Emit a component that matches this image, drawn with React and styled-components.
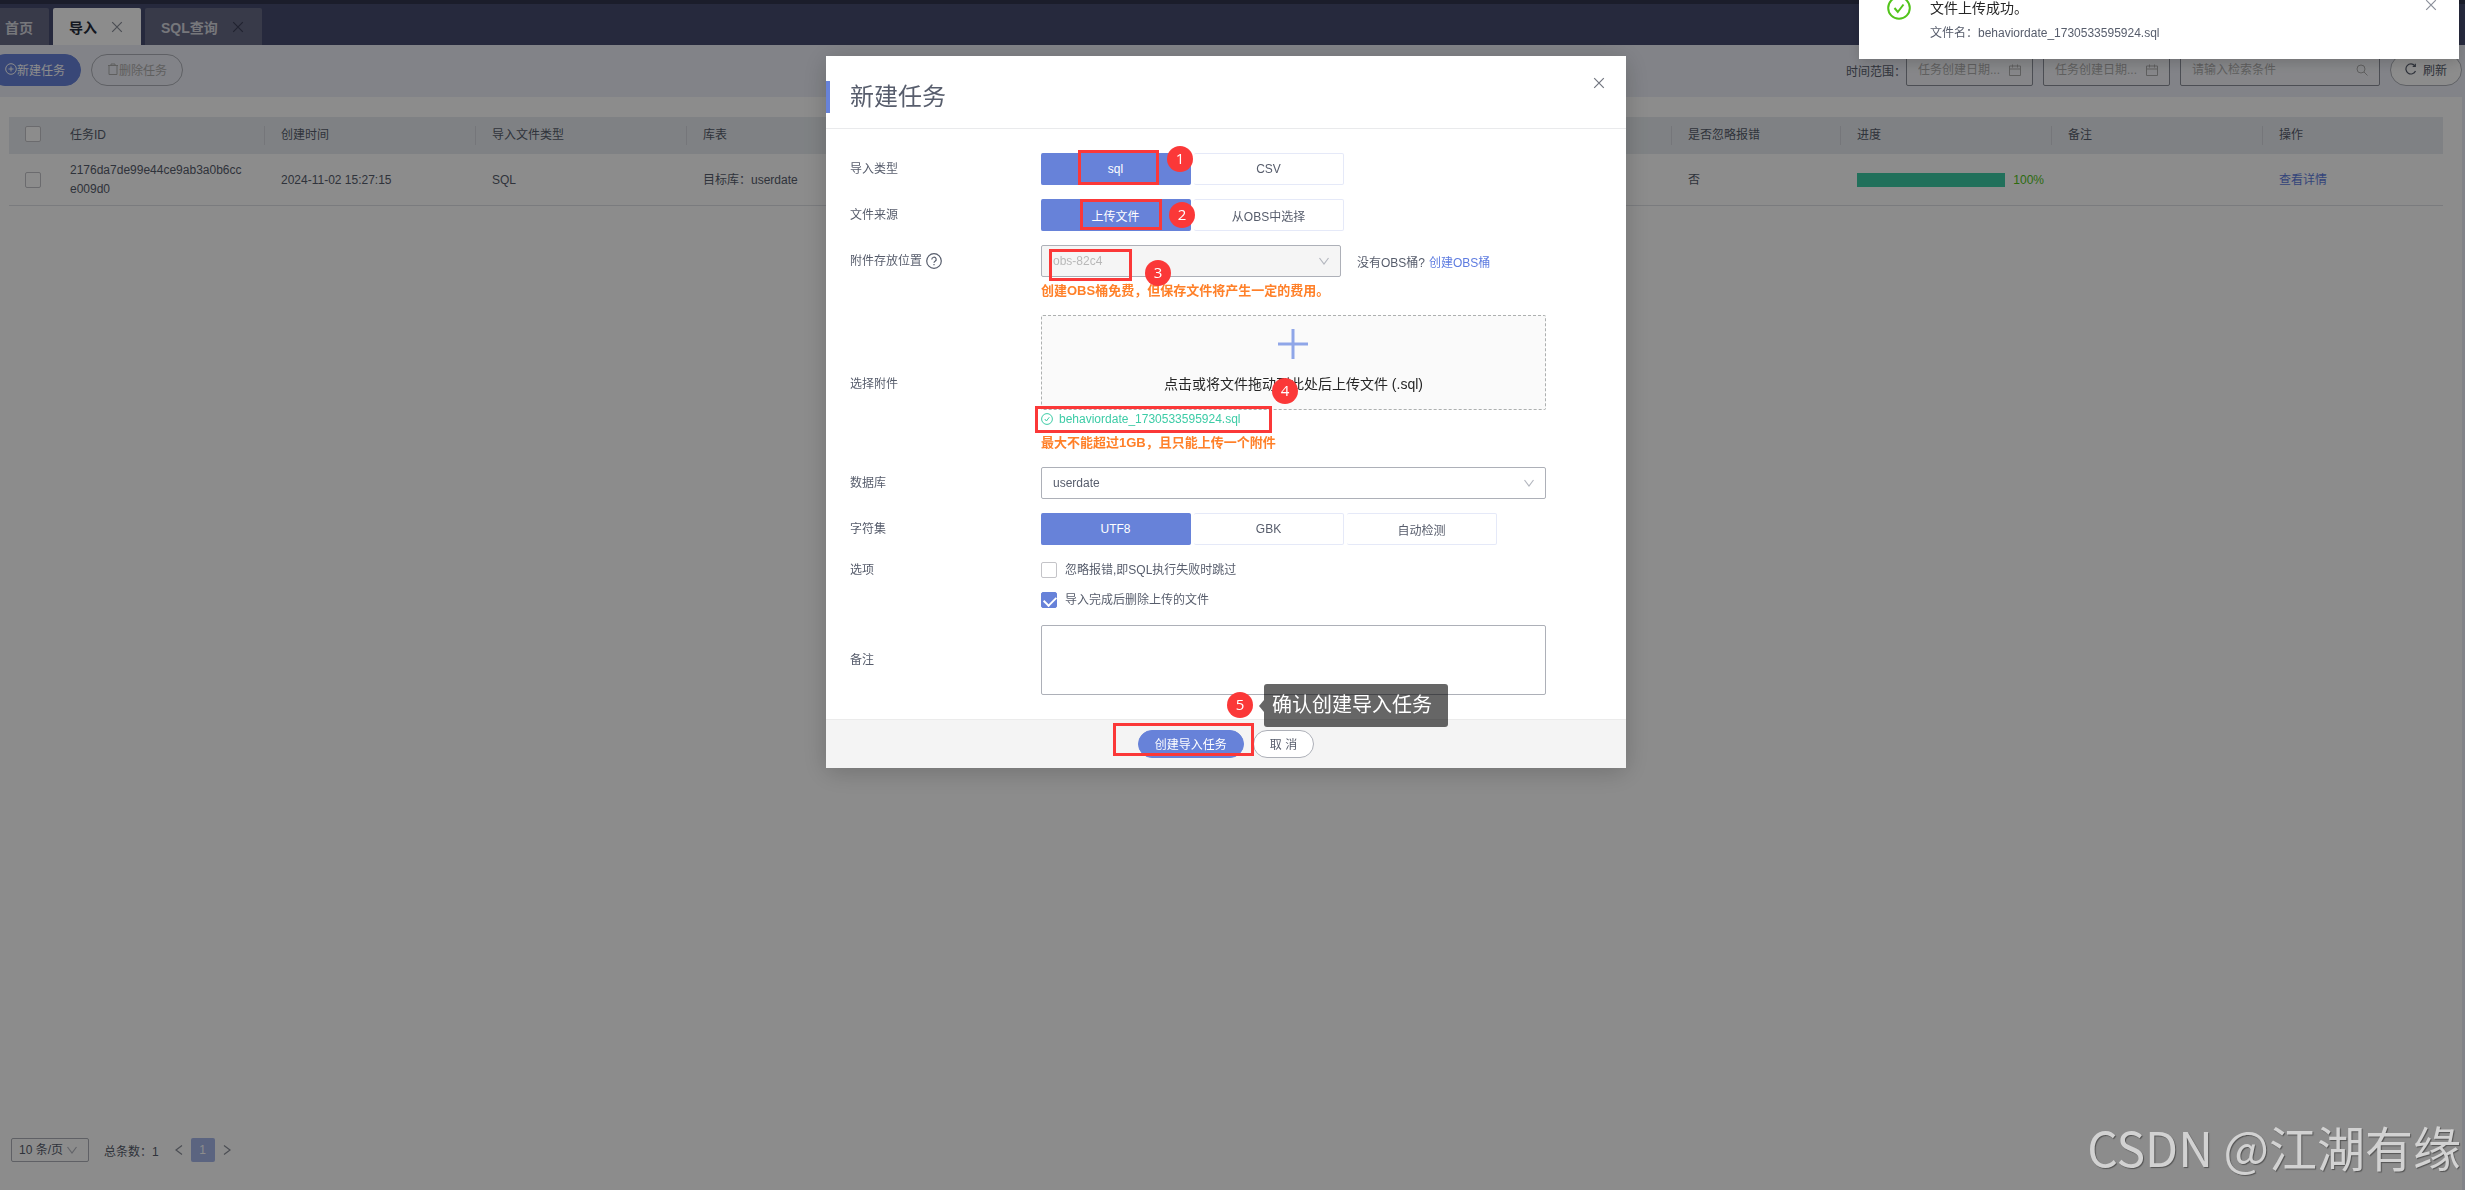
import React, { useState } from "react";
import styled, { createGlobalStyle } from "styled-components";

const GlobalStyle = createGlobalStyle`
  * {
    box-sizing: border-box;
  }
  body {
    margin: 0;
    background: #edeff7;
    overflow: hidden;
  }
  body, button, input, select, textarea {
    font-family: "Liberation Sans", "Noto Sans CJK SC", sans-serif;
    font-size: 12px;
    color: #575d6c;
  }
  a {
    color: #5e7ce0;
    text-decoration: none;
  }
`;

/* ---------- icons ---------- */

const Svg = styled.svg`
  display: block;
  flex: none;
  fill: none;
  stroke: currentColor;
`;

const CloseIcon = () => (
  <Svg width="12" height="12" viewBox="0 0 12 12" strokeWidth="1.2">
    <path d="M1.200 1.200l9.600 9.600M10.800 1.200l-9.600 9.600" />
  </Svg>
);

const DownIcon = () => (
  <Svg width="12" height="12" viewBox="0 0 12 12" strokeWidth="1.2">
    <path d="M1.500 3L6 9l4.500-6" />
  </Svg>
);

const ArrowIcon = ({ next }) => (
  <Svg width="10" height="12" viewBox="0 0 10 12" strokeWidth="1.2">
    <path d={next ? "M2 1.500L8 6l-6 4.500" : "M8 1.500L2 6l6 4.500"} />
  </Svg>
);

const PlusCircleIcon = () => (
  <Svg width="12" height="12" viewBox="0 0 12 12" strokeWidth="1">
    <circle cx="6" cy="6" r="5.300" />
    <path d="M6 3.500v5M3.500 6h5" />
  </Svg>
);

const TrashIcon = () => (
  <Svg width="12" height="12" viewBox="0 0 12 12" strokeWidth="1">
    <path d="M1 2.500h10M4 2.500v-1.500h4v1.500M2 2.500v9h8v-9" />
  </Svg>
);

const CalendarIcon = () => (
  <Svg width="12" height="12" viewBox="0 0 12 12" strokeWidth="1">
    <path d="M.5 2h11v9.500H.5zM.5 5h11M3.500.5v3M8.500.5v3" />
  </Svg>
);

const SearchIcon = () => (
  <Svg width="12" height="12" viewBox="0 0 12 12" strokeWidth="1">
    <circle cx="5" cy="5" r="4" />
    <path d="M8 8l3.500 3.500" />
  </Svg>
);

const RefreshIcon = () => (
  <Svg width="12" height="12" viewBox="0 0 12 12" strokeWidth="1.2">
    <path d="M10.500 8A5 5 0 1 1 9.800 2.800" />
    <path d="M10.300.8v2.600H7.700" />
  </Svg>
);

const HelpIcon = () => (
  <Svg width="16" height="16" viewBox="0 0 16 16" strokeWidth="1.2">
    <circle cx="8" cy="8" r="7.300" />
    <path d="M5.800 6.400a2.200 2.200 0 1 1 3.300 1.900c-.8.500-1.100.8-1.100 1.500" />
    <path d="M8 11v1.300" />
  </Svg>
);

const CheckCircleIcon = ({ size }) => (
  <Svg width={size} height={size} viewBox="0 0 24 24" strokeWidth="2">
    <circle cx="12" cy="12" r="10.800" />
    <path d="M7.500 12l3.300 4L16.500 8.500" />
  </Svg>
);

const PlusIcon = () => (
  <Svg width="30" height="30" viewBox="0 0 30 30" strokeWidth="3">
    <path d="M15 0v30M0 15h30" />
  </Svg>
);

/* ---------- page ---------- */

const Page = styled.div`
  display: flex;
  flex-direction: column;
  min-height: 100vh;
  overflow: hidden;
`;

const TabBar = styled.nav`
  display: flex;
  align-items: flex-end;
  gap: 4px;
  height: 45px;
  margin-left: -11px;
  border-top: 4px solid #32364f;
  background: #464c70;
`;

const Tab = styled.div`
  display: flex;
  align-items: center;
  gap: 14px;
  height: 37px;
  padding: 0 ${(p) => (p.$closable ? 18 : 16)}px 0 16px;
  border-radius: 2px 2px 0 0;
  background: ${(p) => (p.$active ? "#fff" : "#676a85")};
  color: ${(p) => (p.$active ? "#252b3a" : "#d8d9e0")};
  font-size: 14px;
  font-weight: 700;
`;

const IconButton = styled.button`
  display: flex;
  align-items: center;
  justify-content: center;
  padding: 0;
  border: 0;
  background: none;
  color: ${(p) => p.$color || "#8a8e99"};
`;

const Toolbar = styled.div`
  display: flex;
  align-items: center;
  justify-content: space-between;
  height: 52px;
  padding: 0 3px 2px 0;
  margin-left: -11px;
  background: #edeff7;
`;

const Group = styled.div`
  display: flex;
  align-items: center;
  gap: 10px;
`;

const PillButton = styled.button`
  display: flex;
  align-items: center;
  justify-content: center;
  gap: ${(p) => p.$gap || 0}px;
  height: ${(p) => p.$height || 32}px;
  padding: 0 ${(p) => p.$pad || 15}px 2px;
  border: 1px solid ${(p) => (p.$primary ? "#6782d9" : "#adb0b8")};
  border-radius: 16px;
  background: ${(p) => (p.$primary ? "#6782d9" : "#fff")};
  color: ${(p) => (p.$primary ? "#fff" : "#575d6c")};
  white-space: pre;

  &:disabled {
    background: transparent;
    color: #adadad;
  }
`;

const Field = styled.label`
  display: flex;
  align-items: center;
  width: ${(p) => p.$width}px;
  height: 32px;
  padding: 0 11px;
  border: 1px solid #8a8e99;
  border-radius: 2px;
  background: #f4f5f9;
  color: #adadad;

  input {
    flex: 1;
    min-width: 0;
    padding: 0;
    border: 0;
    outline: 0;
    background: none;
  }
  input::placeholder {
    color: #adadad;
  }
`;

const RangeLabel = styled.div`
  display: flex;
  align-items: center;
`;

const Main = styled.main`
  flex: 1;
  margin-right: 3px;
  padding: 20px 19px 0 9px;
  background: #fff;
`;

const Table = styled.table`
  width: 100%;
  border-collapse: separate;
  border-spacing: 0;
  table-layout: fixed;
  line-height: 19px;

  th, td {
    padding: 7px 8px 6px 16px;
    text-align: left;
    font-weight: 400;
    word-break: break-all;
  }
  th {
    height: 37px;
    padding: 0;
    background: #e8ecf0;
  }
  td {
    height: 52px;
    border-bottom: 1px solid #dfe1e6;
  }
`;

const HeadText = styled.div`
  height: 19px;
  padding-left: 16px;
  border-right: ${(p) => (p.$last ? 0 : 1)}px solid #d5d8de;
`;

const TaskId = styled.div`
  width: 176px;
`;

const CheckBox = styled.input`
  appearance: none;
  display: block;
  flex: none;
  width: 16px;
  height: 16px;
  margin: 0;
  border: 1px solid #c4c4c8;
  border-radius: 2px;
  background: #fff;

  &:checked {
    border-color: #6782d9;
    background: #6782d9;
  }
  &:checked::after {
    content: "";
    display: block;
    width: 10px;
    height: 6px;
    margin: 3px 2px;
    border: solid #fff;
    border-width: 0 0 2px 2px;
    transform: rotate(-45deg);
  }
`;

const Progress = styled.div`
  display: flex;
  align-items: center;
  gap: 8px;
  color: #52c41a;
`;

const Bar = styled.div`
  flex: 1;
  height: 14px;
  background: #e8ecf0;

  div {
    height: 100%;
    background: #3dcca6;
  }
`;

const Pagination = styled.footer`
  display: flex;
  align-items: center;
  margin-right: 3px;
  padding: 0 11px 28px;
  background: #fff;
`;

const Total = styled.span`
  margin: 0 15px;
`;

const PageButton = styled.button`
  width: 24px;
  height: 24px;
  margin: 0 7px;
  padding: 0;
  border: 0;
  border-radius: 2px;
  background: #a6b6ea;
  color: #fff;
`;

/* ---------- form controls ---------- */

const SelectBox = styled.div`
  position: relative;
  width: ${(p) => p.$width};
  color: #b4b7bf;

  select {
    display: block;
    width: 100%;
    height: ${(p) => p.$height || 32}px;
    padding: 0 ${(p) => p.$pad || 11}px;
    appearance: none;
    border: 1px solid #adb0b8;
    border-radius: 2px;
    background: #fff;
  }
  select:disabled {
    background: #f5f5f5;
    color: #b8b8b8;
    opacity: 1;
  }
  svg {
    position: absolute;
    top: 50%;
    right: 11px;
    margin-top: -6px;
    pointer-events: none;
  }
`;

const Select = ({ id, options, disabled, label, ...box }) => (
  <SelectBox {...box}>
    <select id={id} disabled={disabled} aria-label={label}>
      {options.map((item) => (
        <option key={item}>{item}</option>
      ))}
    </select>
    <DownIcon />
  </SelectBox>
);

const SegmentGroup = styled.div`
  display: flex;
  gap: 3px;
`;

const Segment = styled.label`
  position: relative;
  display: flex;
  align-items: center;
  justify-content: center;
  width: 150px;
  height: 32px;
  border: 1px solid #e5e9f8;
  border-left: 0;
  border-radius: 2px;

  &:has(input:checked) {
    border-color: #6782d9;
    background: #6782d9;
    color: #fff;
  }
  input {
    position: absolute;
    opacity: 0;
  }
`;

const Segments = ({ name, options, label }) => {
  const [value, setValue] = useState(options[0]);
  return (
    <SegmentGroup role="radiogroup" aria-label={label}>
      {options.map((item) => (
        <Segment key={item}>
          <input
            type="radio"
            name={name}
            checked={item === value}
            onChange={() => setValue(item)}
          />
          {item}
        </Segment>
      ))}
    </SegmentGroup>
  );
};

/* ---------- modal ---------- */

const Mask = styled.div`
  position: fixed;
  inset: 0;
  background: rgba(0, 0, 0, 0.45);
`;

const ModalWrap = styled.div`
  position: fixed;
  inset: 0;
  display: flex;
  align-items: flex-start;
  justify-content: center;
  padding: 56px 13px 0 0;
`;

const Modal = styled.section`
  position: relative;
  width: 800px;
  background: #fff;
  box-shadow: 0 4px 24px rgba(0, 0, 0, 0.2);
`;

const ModalHeader = styled.header`
  display: flex;
  align-items: flex-start;
  justify-content: space-between;
  padding: 17px 17px 15px 0;
  border-bottom: 1px solid #e9eaec;

  h2 {
    margin: 8px 0 0;
    padding-left: 20px;
    border-left: 4px solid #6782d9;
    font-size: 24px;
    font-weight: 400;
    line-height: 32px;
  }
  button {
    width: 20px;
    height: 20px;
  }
`;

const Form = styled.form`
  display: flex;
  flex-direction: column;
  gap: 14px;
  padding: 24px;
`;

const Row = styled.div`
  display: grid;
  grid-template-columns: 191px 1fr;
  align-items: ${(p) => (p.$top ? "start" : "center")};
`;

const RowLabel = styled.label`
  display: flex;
  align-items: center;
  gap: 4px;
  line-height: ${(p) => p.$line || 32}px;
`;

const Inline = styled.div`
  display: flex;
  align-items: center;
  gap: 16px;

  a {
    margin-left: 4px;
  }
`;

const Hint = styled.p`
  margin: 4px 0 0;
  color: #ff8029;
  font-size: 13px;
  font-weight: 700;
  line-height: 20px;
`;

const Upload = styled.button`
  display: flex;
  flex-direction: column;
  align-items: center;
  gap: 14px;
  width: 90%;
  height: 95px;
  padding: 13px 0 0;
  border: 1px dashed #adb0b0;
  border-radius: 2px;
  background: #fafafa;
  color: #262626;
  font-size: 14px;
  line-height: 22px;

  svg {
    color: #8fa6e8;
  }
`;

const FileItem = styled.div`
  display: flex;
  align-items: center;
  gap: 6px;
  padding-bottom: 1px;
  line-height: 18px;
  color: #3dcca6;
`;

const CheckList = styled.div`
  display: flex;
  flex-direction: column;
  gap: 8px;

  label {
    display: flex;
    align-items: center;
    gap: 8px;
    line-height: 22px;
  }
`;

const TextArea = styled.textarea`
  display: block;
  width: 90%;
  height: 70px;
  border: 1px solid #adb0b8;
  border-radius: 2px;
  resize: none;
`;

const ModalFooter = styled.footer`
  display: flex;
  justify-content: center;
  gap: 9px;
  padding: 10px;
  border-top: 1px solid #ebebeb;
  background: #f4f4f4;
`;

/* ---------- walkthrough marks ---------- */

const Frame = styled.div`
  position: absolute;
  left: ${(p) => p.$x}px;
  top: ${(p) => p.$y}px;
  width: ${(p) => p.$w}px;
  height: ${(p) => p.$h}px;
  border: 3px solid #fb3838;
  pointer-events: none;
`;

const Step = styled.span`
  position: absolute;
  left: ${(p) => p.$x}px;
  top: ${(p) => p.$y}px;
  width: 26px;
  height: 26px;
  border-radius: 50%;
  background: #fb3838;
  color: #fff;
  font-family: "Open Sans", sans-serif;
  font-size: 15px;
  line-height: 24px;
  text-align: center;
`;

const Tip = styled.div`
  position: absolute;
  left: 438px;
  top: 628px;
  padding: 0 16px 0 8px;
  border-radius: 3px;
  background: rgba(0, 0, 0, 0.6);
  color: #fff;
  font-size: 20px;
  line-height: 43px;

  &::before {
    content: "";
    position: absolute;
    left: -5px;
    top: 16px;
    border: solid transparent;
    border-width: 6px 5px 6px 0;
    border-right-color: rgba(0, 0, 0, 0.6);
  }
`;

const marks = [
  { frame: [252, 94, 81, 35], step: [341, 90] },
  { frame: [254, 143, 82, 31], step: [343, 146] },
  { frame: [223, 193, 83, 32], step: [319, 204] },
  { frame: [209, 350, 237, 27], step: [446, 322] },
  { frame: [287, 667, 141, 33], step: [401, 636] },
];

/* ---------- notification ---------- */

const Notice = styled.aside`
  position: fixed;
  top: -20px;
  right: 6px;
  display: flex;
  align-items: flex-start;
  gap: 19px;
  width: 600px;
  padding: 16px 22px 17px 28px;
  background: #fff;
  box-shadow: 0 4px 12px rgba(0, 0, 0, 0.15);

  > svg {
    color: #52c41a;
  }
  div {
    flex: 1;
  }
  h3 {
    margin: 0;
    color: #262626;
    font-size: 14px;
    font-weight: 400;
    line-height: 24px;
  }
  p {
    margin: 4px 0 0;
    line-height: 18px;
  }
  button {
    height: 18px;
  }
`;

const Watermark = styled.div`
  position: fixed;
  right: 4px;
  bottom: 8px;
  color: #d2d2d2;
  font-family: "Noto Sans CJK SC", sans-serif;
  font-size: 48px;
  font-weight: 400;
  line-height: 72px;
  text-shadow: 1px 1px 1px rgba(0, 0, 0, 0.4);
`;

const columns = [
  { title: "任务ID", width: 211 },
  { title: "创建时间", width: 211 },
  { title: "导入文件类型", width: 211 },
  { title: "库表" },
  { title: "是否忽略报错", width: 169 },
  { title: "进度", width: 211 },
  { title: "备注", width: 211 },
  { title: "操作", width: 180 },
];

const tasks = [
  {
    id: "2176da7de99e44ce9ab3a0b6cce009d0",
    time: "2024-11-02 15:27:15",
    type: "SQL",
    target: "目标库：userdate",
    ignore: "否",
    progress: 100,
    remark: "",
  },
];

const ImportPage = () => (
  <Page>
    <TabBar>
      <Tab>首页</Tab>
      <Tab $active $closable>
        导入
        <IconButton aria-label="关闭导入" $color="#8a8e99">
          <CloseIcon />
        </IconButton>
      </Tab>
      <Tab $closable>
        SQL查询
        <IconButton aria-label="关闭SQL查询" $color="#3c4059">
          <CloseIcon />
        </IconButton>
      </Tab>
    </TabBar>
    <Toolbar>
      <Group>
        <PillButton $primary>
          <PlusCircleIcon />
          新建任务
        </PillButton>
        <PillButton disabled>
          <TrashIcon />
          删除任务
        </PillButton>
      </Group>
      <Group>
        <RangeLabel>
          <span>时间范围：</span>
          <Field $width={127}>
            <input placeholder="任务创建日期..." aria-label="开始日期" />
            <CalendarIcon />
          </Field>
        </RangeLabel>
        <Field $width={127}>
          <input placeholder="任务创建日期..." aria-label="结束日期" />
          <CalendarIcon />
        </Field>
        <Field $width={200}>
          <input placeholder="请输入检索条件" aria-label="检索条件" />
          <SearchIcon />
        </Field>
        <PillButton $gap={6} $pad={14}>
          <RefreshIcon />
          刷新
        </PillButton>
      </Group>
    </Toolbar>
    <Main>
      <Table>
        <colgroup>
          <col style={{ width: 45 }} />
          {columns.map((col) => (
            <col key={col.title} style={{ width: col.width }} />
          ))}
        </colgroup>
        <thead>
          <tr>
            <th>
              <HeadText $last>
                <CheckBox type="checkbox" aria-label="全选" />
              </HeadText>
            </th>
            {columns.map((col, i) => (
              <th key={col.title}>
                <HeadText $last={i === columns.length - 1}>{col.title}</HeadText>
              </th>
            ))}
          </tr>
        </thead>
        <tbody>
          {tasks.map((task) => (
            <tr key={task.id}>
              <td>
                <CheckBox type="checkbox" aria-label="选择任务" />
              </td>
              <td>
                <TaskId>{task.id}</TaskId>
              </td>
              <td>{task.time}</td>
              <td>{task.type}</td>
              <td>{task.target}</td>
              <td>{task.ignore}</td>
              <td>
                <Progress>
                  <Bar>
                    <div style={{ width: `${task.progress}%` }} />
                  </Bar>
                  {task.progress}%
                </Progress>
              </td>
              <td>{task.remark}</td>
              <td>
                <a href="#detail">查看详情</a>
              </td>
            </tr>
          ))}
        </tbody>
      </Table>
    </Main>
    <Pagination>
      <Select
        label="每页条数"
        options={["10 条/页"]}
        $width="78px"
        $height={24}
        $pad={7}
      />
      <Total>总条数：1</Total>
      <IconButton aria-label="上一页">
        <ArrowIcon />
      </IconButton>
      <PageButton>1</PageButton>
      <IconButton aria-label="下一页">
        <ArrowIcon next />
      </IconButton>
    </Pagination>
  </Page>
);

const CreateTaskModal = () => (
  <ModalWrap>
    <Modal role="dialog" aria-labelledby="modal-title">
      <ModalHeader>
        <h2 id="modal-title">新建任务</h2>
        <IconButton aria-label="关闭" $color="#71757f">
          <CloseIcon />
        </IconButton>
      </ModalHeader>
      <Form>
        <Row>
          <RowLabel as="span">导入类型</RowLabel>
          <Segments name="type" label="导入类型" options={["sql", "CSV"]} />
        </Row>
        <Row>
          <RowLabel as="span">文件来源</RowLabel>
          <Segments
            name="source"
            label="文件来源"
            options={["上传文件", "从OBS中选择"]}
          />
        </Row>
        <Row $top>
          <RowLabel htmlFor="bucket">
            附件存放位置
            <HelpIcon />
          </RowLabel>
          <div>
            <Inline>
              <Select id="bucket" disabled options={["obs-82c4"]} $width="300px" />
              <span>
                没有OBS桶?
                <a href="#bucket">创建OBS桶</a>
              </span>
            </Inline>
            <Hint>创建OBS桶免费，但保存文件将产生一定的费用。</Hint>
          </div>
        </Row>
        <Row>
          <RowLabel htmlFor="attachment">选择附件</RowLabel>
          <div>
            <Upload type="button" id="attachment">
              <PlusIcon />
              点击或将文件拖动到此处后上传文件 (.sql)
            </Upload>
            <FileItem>
              <CheckCircleIcon size={12} />
              behaviordate_1730533595924.sql
            </FileItem>
            <Hint>最大不能超过1GB，且只能上传一个附件</Hint>
          </div>
        </Row>
        <Row>
          <RowLabel htmlFor="database">数据库</RowLabel>
          <Select id="database" options={["userdate"]} $width="90%" />
        </Row>
        <Row>
          <RowLabel as="span">字符集</RowLabel>
          <Segments
            name="charset"
            label="字符集"
            options={["UTF8", "GBK", "自动检测"]}
          />
        </Row>
        <Row $top>
          <RowLabel as="span" $line={22}>
            选项
          </RowLabel>
          <CheckList>
            <label>
              <CheckBox type="checkbox" />
              忽略报错,即SQL执行失败时跳过
            </label>
            <label>
              <CheckBox type="checkbox" defaultChecked />
              导入完成后删除上传的文件
            </label>
          </CheckList>
        </Row>
        <Row>
          <RowLabel htmlFor="remark">备注</RowLabel>
          <TextArea id="remark" />
        </Row>
      </Form>
      <ModalFooter>
        <PillButton $primary $height={28} $pad={16}>
          创建导入任务
        </PillButton>
        <PillButton $height={28} $pad={16}>
          取 消
        </PillButton>
      </ModalFooter>
      {marks.map(({ frame: [x, y, w, h] }) => (
        <Frame key={y} $x={x} $y={y} $w={w} $h={h} />
      ))}
      {marks.map(({ step: [x, y] }, i) => (
        <Step key={y} $x={x} $y={y}>
          {i + 1}
        </Step>
      ))}
      <Tip>确认创建导入任务</Tip>
    </Modal>
  </ModalWrap>
);

const App = () => (
  <>
    <GlobalStyle />
    <ImportPage />
    <Mask />
    <CreateTaskModal />
    <Notice>
      <CheckCircleIcon size={24} />
      <div>
        <h3>文件上传成功。</h3>
        <p>文件名：behaviordate_1730533595924.sql</p>
      </div>
      <IconButton aria-label="关闭通知">
        <CloseIcon />
      </IconButton>
    </Notice>
    <Watermark>CSDN @江湖有缘</Watermark>
  </>
);

export default App;
